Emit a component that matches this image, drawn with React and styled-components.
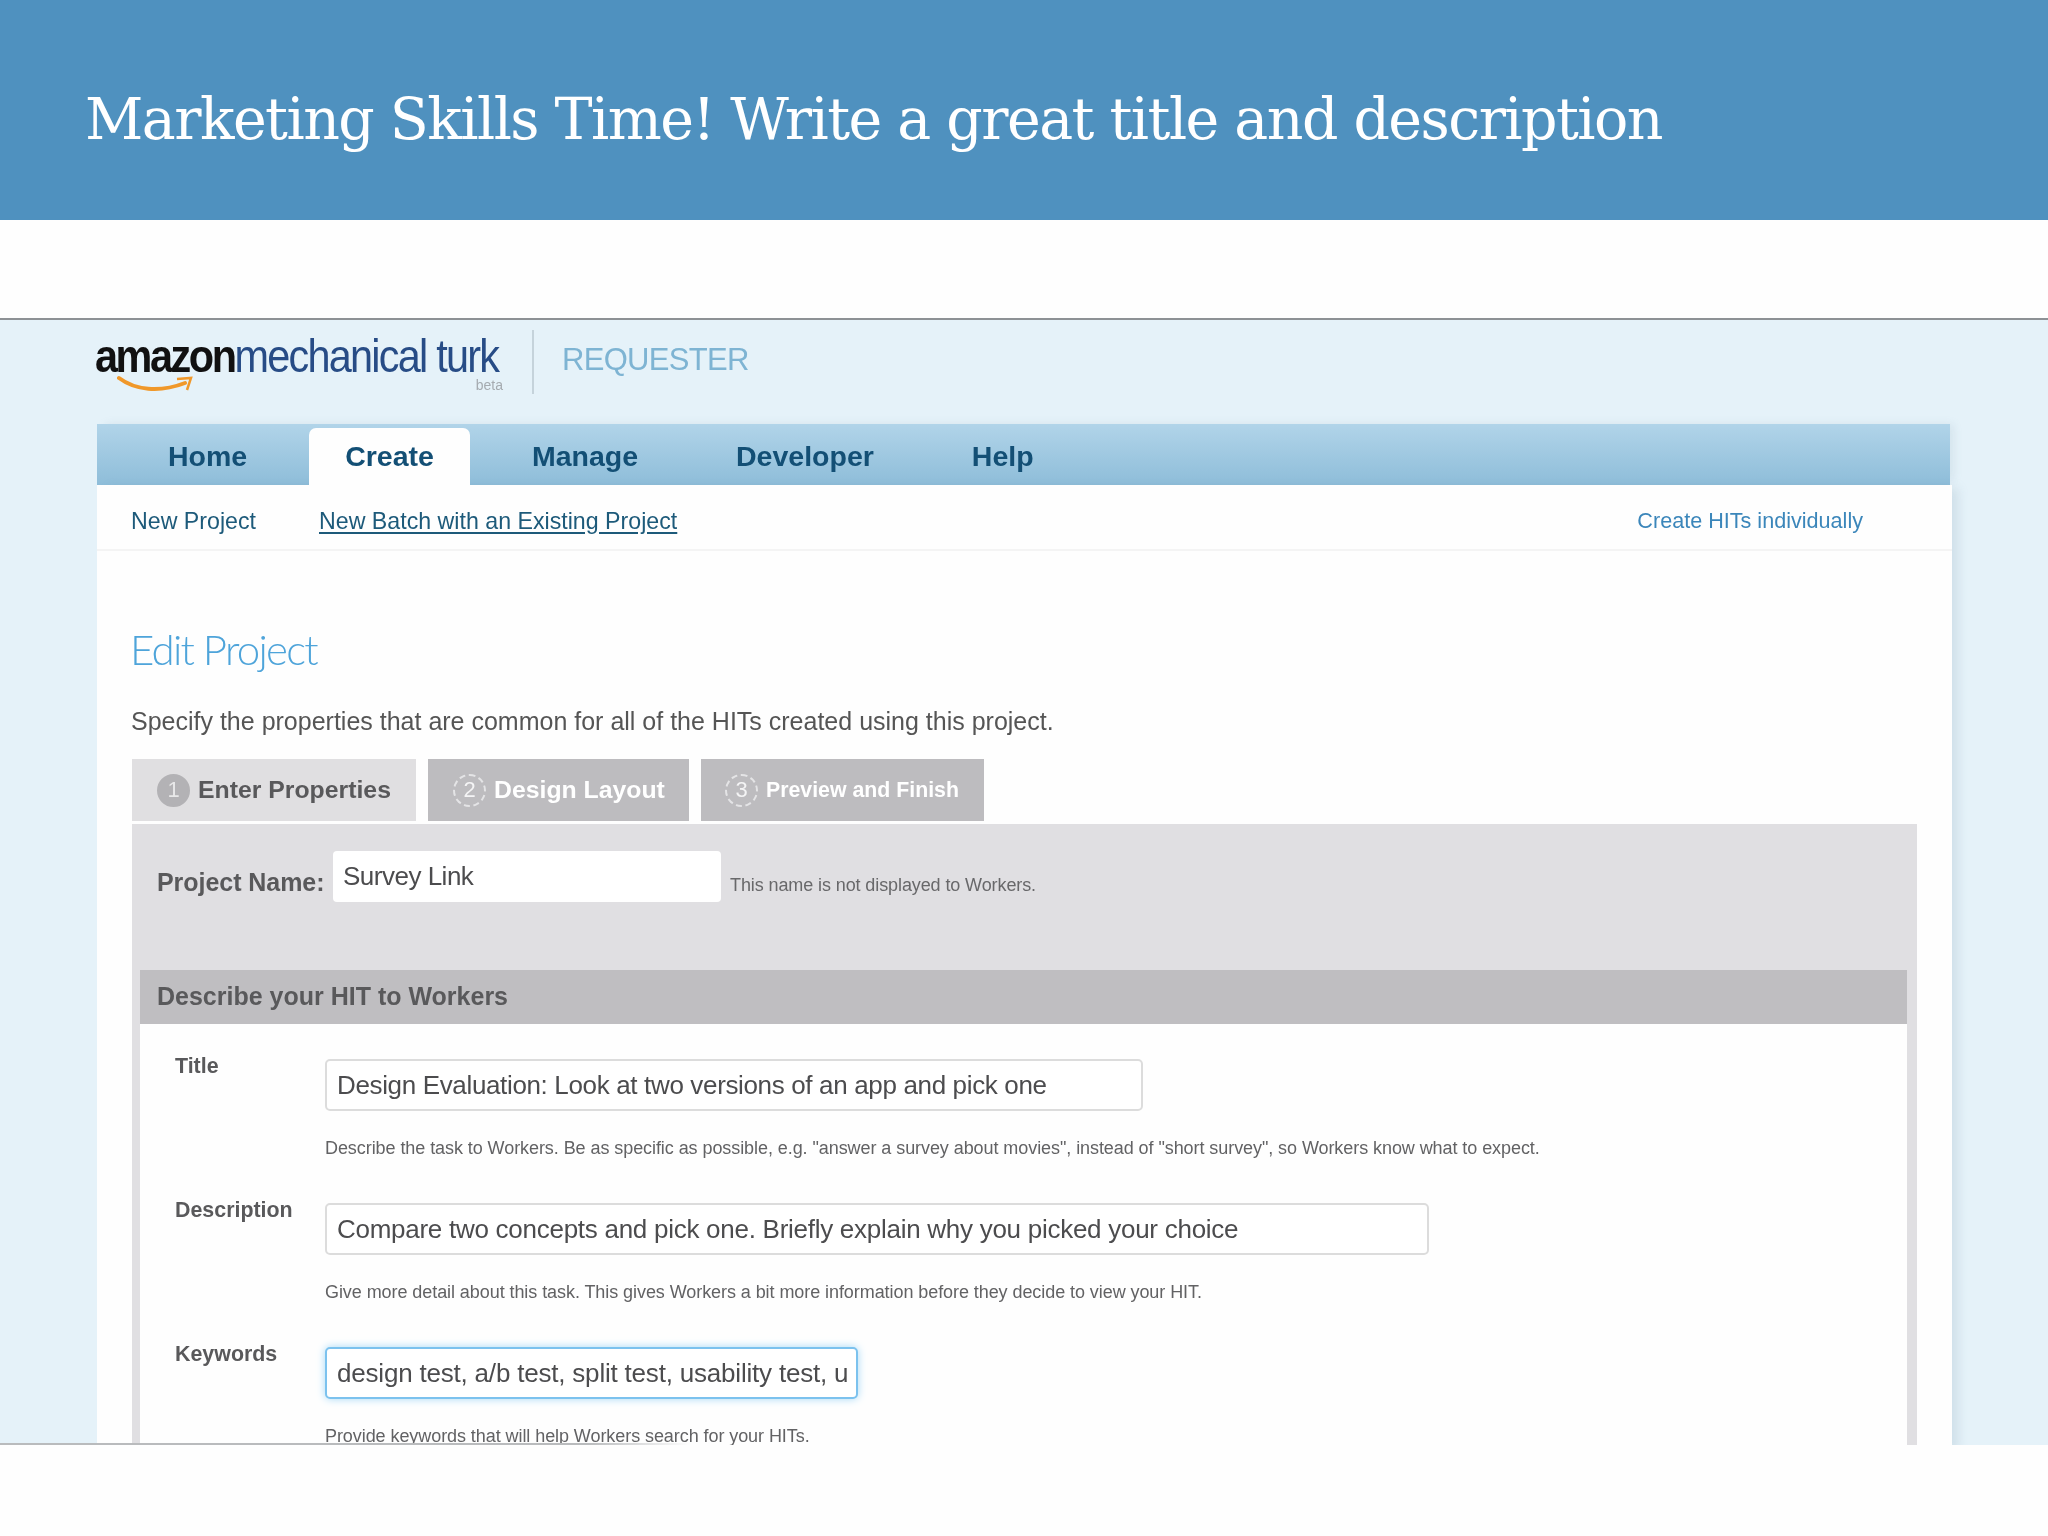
import React from "react";
import styled, { createGlobalStyle } from "styled-components";

const GlobalStyle = createGlobalStyle`
  html, body {
    margin: 0;
    padding: 0;
    background: #fefefe;
  }
  * {
    box-sizing: border-box;
  }
`;

const Slide = styled.div`
  width: 2048px;
  height: 1536px;
  overflow: hidden;
  font-family: "Liberation Sans", Arial, sans-serif;
`;

const Banner = styled.header`
  height: 220px;
  padding-left: 85px;
  display: flex;
  align-items: center;
  background: #4f91bf;
`;

const SlideTitle = styled.h1`
  margin: 18px 0 0;
  font-family: "DejaVu Serif", serif;
  font-size: 57px;
  font-weight: 400;
  letter-spacing: -1.55px;
  color: #fff;
`;

const Shot = styled.section`
  position: relative;
  height: 1127px;
  margin-top: 98px;
  padding: 0 96px 0 97px;
  overflow: hidden;
  border-top: 2px solid #8d9195;
  background: #e5f2f9;
  &::after {
    content: "";
    position: absolute;
    left: 0;
    bottom: 0;
    width: 690px;
    height: 2px;
    background: linear-gradient(90deg, #b9bbbd 85%, rgba(185, 187, 189, 0));
  }
`;

const Blurred = styled.div`
  filter: blur(0.75px);
`;

const LogoRow = styled.div`
  height: 104px;
  display: flex;
  align-items: flex-start;
`;

const Logo = styled.div`
  position: relative;
  width: 435px;
  height: 70px;
  margin-top: 12px;
  svg {
    position: absolute;
    left: 20px;
    top: 43px;
  }
`;

const LogoWords = styled.div`
  margin: 6px 0 0 -2px;
  font-size: 46px;
  line-height: 36px;
  letter-spacing: -1.95px;
  white-space: nowrap;
  color: #274c86;
  transform: scaleX(0.9);
  transform-origin: left center;
`;

const LogoAmazon = styled.span`
  font-weight: 700;
  color: #111;
  letter-spacing: -2.7px;
`;

const LogoBeta = styled.span`
  position: absolute;
  right: 29px;
  top: 46px;
  font-size: 14px;
  line-height: 14px;
  color: #a5abb0;
`;

const LogoDivider = styled.div`
  width: 2px;
  height: 64px;
  margin-top: 10px;
  background: #c5d3db;
`;

const Requester = styled.div`
  margin: 21px 0 0 28px;
  font-size: 31px;
  line-height: 38px;
  letter-spacing: -0.7px;
  color: #7eb4d3;
`;

const Nav = styled.nav`
  height: 61px;
  margin-right: 2px;
  padding-left: 35px;
  display: flex;
  align-items: flex-end;
  gap: 26px;
  background: linear-gradient(180deg, #b1d4e9, #8ebdd9);
  box-shadow: 6px -2px 8px -2px rgba(120, 150, 170, 0.14);
`;

const NavTab = styled.div`
  height: 57px;
  padding: 0 36px;
  display: flex;
  align-items: center;
  border-radius: 7px 7px 0 0;
  font-size: 28.5px;
  font-weight: 700;
  color: #134f75;
  background: ${(props) => (props.$active ? "#fefefe" : "transparent")};
`;

const Sheet = styled.div`
  height: 969px;
  background: #fefefe;
  box-shadow: 9px 0 10px -3px rgba(120, 150, 170, 0.2);
`;

const SubNav = styled.div`
  height: 66px;
  padding: 8px 89px 0 34px;
  display: flex;
  align-items: center;
  border-bottom: 2px solid #f4f4f4;
  font-size: 23.2px;
  color: #1d5a7a;
`;

const SubLink = styled.span`
  margin-left: 63px;
  text-decoration: underline;
  text-underline-offset: 3px;
`;

const IndividualLink = styled.span`
  margin-left: auto;
  font-size: 21.6px;
  color: #3b86ba;
`;

const SheetBody = styled.div`
  padding: 70px 0 0 35px;
`;

const PageTitle = styled.h2`
  margin: 0 0 0 -2px;
  height: 58px;
  font-family: "Lato", "Liberation Sans", sans-serif;
  font-size: 42px;
  font-weight: 300;
  line-height: 56px;
  letter-spacing: -1.75px;
  color: #4ea4da;
`;

const Intro = styled.p`
  margin: 27px 0 0 -1px;
  font-size: 25px;
  line-height: 30px;
  color: #555;
`;

const Steps = styled.div`
  margin-top: 23px;
  display: flex;
  gap: 12px;
`;

const Step = styled.div`
  width: ${(props) => props.$width}px;
  height: 62px;
  padding-left: ${(props) => props.$inset}px;
  display: flex;
  align-items: center;
  gap: 8px;
  font-size: ${(props) => props.$size}px;
  font-weight: 700;
  color: ${(props) => (props.$active ? "#59595b" : "#fff")};
  background: ${(props) => (props.$active ? "#e0dfe1" : "#bdbcbf")};
`;

const StepNumber = styled.span`
  width: 33px;
  height: 33px;
  flex: none;
  display: flex;
  align-items: center;
  justify-content: center;
  border-radius: 50%;
  border: 2px ${(props) => (props.$active ? "solid #b3b2b5" : "dashed #e4e4e6")};
  font-size: 22px;
  font-weight: 400;
  color: ${(props) => (props.$active ? "#e8e8e9" : "#f4f4f5")};
  background: ${(props) => (props.$active ? "#b3b2b5" : "transparent")};
`;

const Panel = styled.div`
  width: 1785px;
  height: 640px;
  margin-top: 3px;
  padding: 0 10px 0 8px;
  background: #e0dfe2;
`;

const ProjectRow = styled.div`
  height: 146px;
  padding: 27px 0 0 17px;
  display: flex;
  align-items: flex-start;
`;

const ProjectLabel = styled.span`
  width: 176px;
  margin-top: 16px;
  font-size: 25px;
  font-weight: 700;
  line-height: 30px;
  letter-spacing: -0.05px;
  color: #59595b;
`;

const ProjectInput = styled.div`
  width: 388px;
  height: 51px;
  padding: 0 10px;
  display: flex;
  align-items: center;
  border-radius: 4px;
  font-size: 26px;
  letter-spacing: -0.5px;
  color: #4c4c4e;
  background: #fff;
`;

const ProjectHint = styled.span`
  margin: 23px 0 0 9px;
  font-size: 18px;
  line-height: 22px;
  letter-spacing: -0.1px;
  color: #68686a;
`;

const SectionHead = styled.div`
  height: 54px;
  padding: 0 0 2px 17px;
  display: flex;
  align-items: center;
  font-size: 25px;
  font-weight: 700;
  color: #59595b;
  background: #bfbec1;
`;

const SectionBody = styled.div`
  height: 440px;
  padding: 35px 0 0 35px;
  background: #fefefe;
`;

const Field = styled.div`
  height: 144px;
  display: grid;
  grid-template-columns: 150px 1fr;
  align-content: start;
  row-gap: 26px;
`;

const FieldLabel = styled.span`
  margin-top: -5px;
  font-size: 21.4px;
  font-weight: 700;
  line-height: 24px;
  color: #59595b;
`;

const FieldInput = styled.div`
  width: ${(props) => props.$width}px;
  height: 52px;
  padding: 0 10px;
  display: flex;
  align-items: center;
  white-space: nowrap;
  border-radius: 5px;
  border: 2px solid ${(props) => (props.$focused ? "#7cc2ee" : "#dcdcdc")};
  box-shadow: ${(props) => (props.$focused ? "0 0 9px #a5d9f7" : "none")};
  font-size: 26px;
  letter-spacing: ${(props) => props.$tracking}px;
  color: #4c4c4e;
  background: #fff;
`;

const FieldHint = styled.span`
  grid-column: 2;
  height: 22px;
  font-size: 18px;
  line-height: 22px;
  letter-spacing: -0.07px;
  white-space: nowrap;
  color: #626264;
`;

const steps = [
  { number: 1, label: "Enter Properties", width: 284, inset: 25, size: 24.8, active: true },
  { number: 2, label: "Design Layout", width: 261, inset: 25, size: 24.8 },
  { number: 3, label: "Preview and Finish", width: 283, inset: 24, size: 21.3 },
];

const fields = [
  {
    label: "Title",
    value: "Design Evaluation: Look at two versions of an app and pick one",
    width: 818,
    tracking: -0.35,
    hint: "Describe the task to Workers. Be as specific as possible, e.g. \"answer a survey about movies\", instead of \"short survey\", so Workers know what to expect.",
  },
  {
    label: "Description",
    value: "Compare two concepts and pick one. Briefly explain why you picked your choice",
    width: 1104,
    tracking: -0.27,
    hint: "Give more detail about this task. This gives Workers a bit more information before they decide to view your HIT.",
  },
  {
    label: "Keywords",
    value: "design test, a/b test, split test, usability test, u",
    width: 533,
    tracking: -0.2,
    focused: true,
    hint: "Provide keywords that will help Workers search for your HITs.",
  },
];

export default function App() {
  return (
    <Slide>
      <GlobalStyle />
      <Banner>
        <SlideTitle>Marketing Skills Time! Write a great title and description</SlideTitle>
      </Banner>

      <Shot>
        <Blurred>
          <LogoRow>
            <Logo>
              <LogoWords>
                <LogoAmazon>amazon</LogoAmazon>mechanical turk
              </LogoWords>
              <svg width="80" height="22" viewBox="0 0 80 22">
                <path d="M2 3C18 15 42 18 68 8" fill="none" stroke="#f0982a" strokeWidth="4" strokeLinecap="round" />
                <path d="M60 4L74 3L70 15" fill="none" stroke="#f0982a" strokeWidth="2.5" />
              </svg>
              <LogoBeta>beta</LogoBeta>
            </Logo>
            <LogoDivider />
            <Requester>REQUESTER</Requester>
          </LogoRow>

          <Nav>
            <NavTab>Home</NavTab>
            <NavTab $active>Create</NavTab>
            <NavTab>Manage</NavTab>
            <NavTab>Developer</NavTab>
            <NavTab>Help</NavTab>
          </Nav>

          <Sheet>
            <SubNav>
              New Project
              <SubLink>New Batch with an Existing Project</SubLink>
              <IndividualLink>Create HITs individually</IndividualLink>
            </SubNav>

            <SheetBody>
              <PageTitle>Edit Project</PageTitle>
              <Intro>Specify the properties that are common for all of the HITs created using this project.</Intro>

              <Steps>
                {steps.map((step) => (
                  <Step key={step.number} $width={step.width} $inset={step.inset} $size={step.size} $active={step.active}>
                    <StepNumber $active={step.active}>{step.number}</StepNumber>
                    {step.label}
                  </Step>
                ))}
              </Steps>

              <Panel>
                <ProjectRow>
                  <ProjectLabel>Project Name:</ProjectLabel>
                  <ProjectInput>Survey Link</ProjectInput>
                  <ProjectHint>This name is not displayed to Workers.</ProjectHint>
                </ProjectRow>
                <SectionHead>Describe your HIT to Workers</SectionHead>
                <SectionBody>
                  {fields.map((field) => (
                    <Field key={field.label}>
                      <FieldLabel>{field.label}</FieldLabel>
                      <FieldInput $width={field.width} $tracking={field.tracking} $focused={field.focused}>{field.value}</FieldInput>
                      <FieldHint>{field.hint}</FieldHint>
                    </Field>
                  ))}
                </SectionBody>
              </Panel>
            </SheetBody>
          </Sheet>
        </Blurred>
      </Shot>
    </Slide>
  );
}
